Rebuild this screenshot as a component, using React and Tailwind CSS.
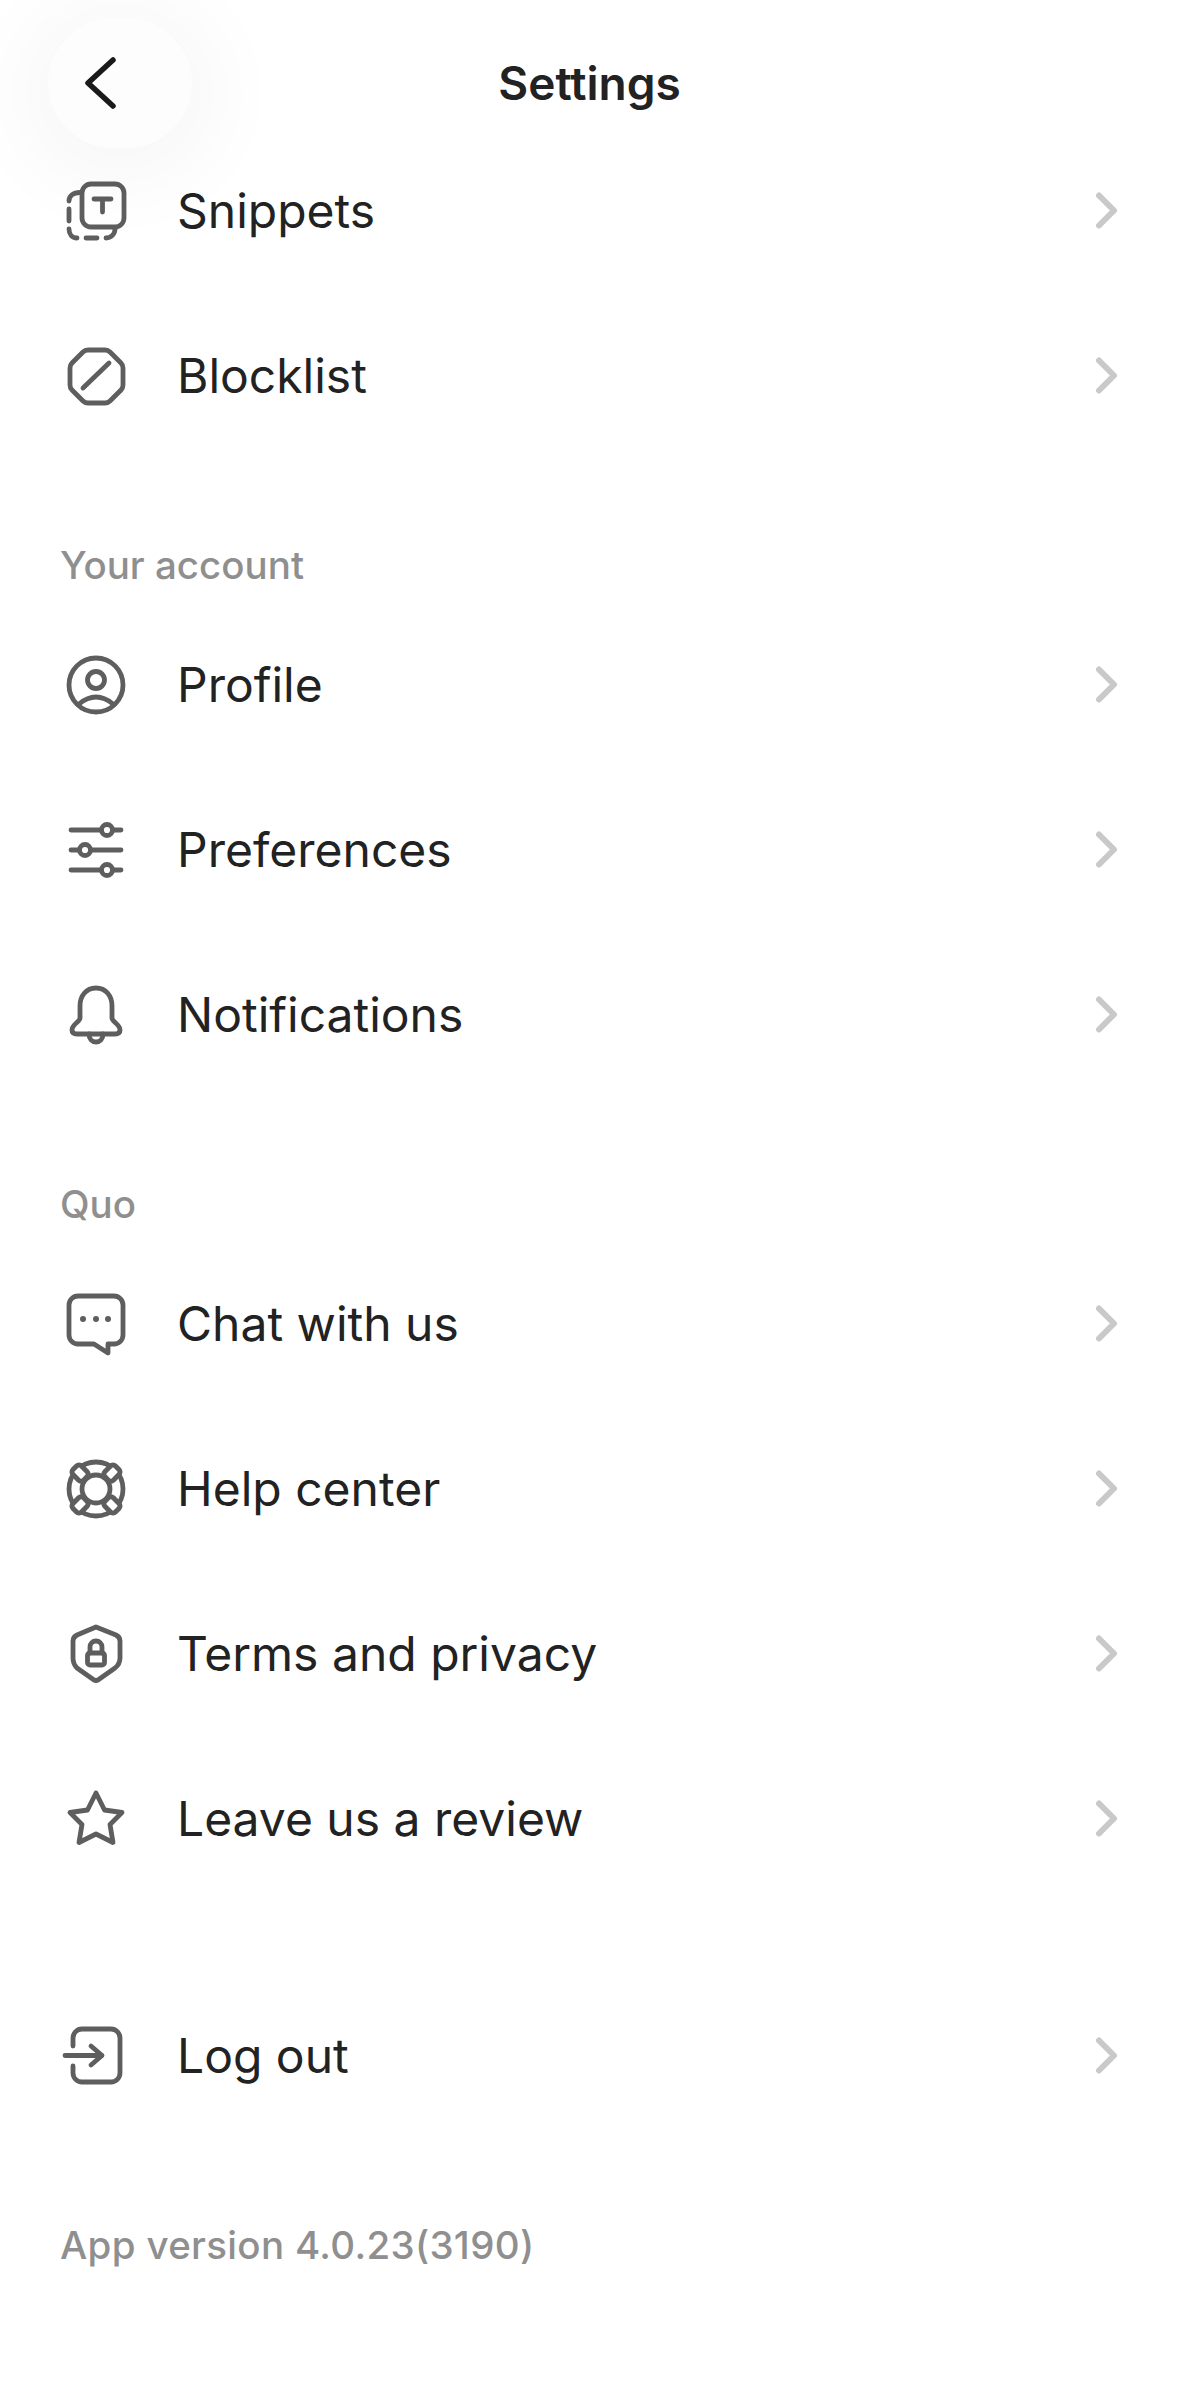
const Icon = ({ children }) => (
  <svg
    viewBox="0 0 72 72"
    fill="none"
    stroke="#5e5e5e"
    strokeWidth="4.8"
    strokeLinecap="round"
    strokeLinejoin="round"
    className="w-[72px] h-[72px] shrink-0"
  >
    {children}
  </svg>
);

const icons = {
  snippets: (
    <>
      <rect x="22" y="9" width="42" height="43" rx="9" />
      <path d="M34 24H51M42.5 24V37" />
      <path d="M20 17.5C13 17.5 9 21 9 26M9 34V46M9 54C9 59 12 63 17 63M26 63H37M46 63C51 63 55 59 55 54" />
    </>
  ),
  blocklist: (
    <>
      <path d="M28 10H45Q48 10 50 12L61 23Q63 25 63 28V45Q63 48 61 50L50 61Q48 63 45 63H28Q25 63 23 61L12 50Q10 48 10 45V28Q10 25 12 23L23 12Q25 10 28 10Z" />
      <path d="M23 48L49 23" />
    </>
  ),
  profile: (
    <>
      <circle cx="36" cy="36" r="27" />
      <circle cx="36" cy="31" r="8.5" />
      <path d="M19 55Q36 41 53 55" />
    </>
  ),
  preferences: (
    <>
      <path d="M11 16H61M11 36H61M11 56H61" />
      <circle cx="47" cy="16" r="5.5" fill="#fff" />
      <circle cx="25" cy="36" r="5.5" fill="#fff" />
      <circle cx="47" cy="56" r="5.5" fill="#fff" />
    </>
  ),
  notifications: (
    <>
      <path d="M36 9C26 9 20 17 20 27V39C20 43 12 45 12 51C12 54 14 55 17 55H55C58 55 60 54 60 51C60 45 52 43 52 39V27C52 17 46 9 36 9Z" />
      <path d="M29 55C29 60 32 63 36 63C40 63 43 60 43 55" />
    </>
  ),
  chat: (
    <>
      <path d="M18 8H54A9 9 0 0 1 63 17V47A9 9 0 0 1 54 56H48V65L34 56H18A9 9 0 0 1 9 47V17A9 9 0 0 1 18 8Z" />
      <g fill="#5e5e5e" stroke="none">
        <circle cx="23" cy="31" r="3" />
        <circle cx="36" cy="31" r="3" />
        <circle cx="48" cy="31" r="3" />
      </g>
    </>
  ),
  help: (
    <>
      <circle cx="36" cy="36" r="27" />
      <circle cx="36" cy="36" r="14" />
      <g fill="#fff" strokeWidth="5">
        <rect x="30" y="6" width="12" height="15" rx="3.5" transform="rotate(45 36 36)" />
        <rect x="30" y="6" width="12" height="15" rx="3.5" transform="rotate(135 36 36)" />
        <rect x="30" y="6" width="12" height="15" rx="3.5" transform="rotate(225 36 36)" />
        <rect x="30" y="6" width="12" height="15" rx="3.5" transform="rotate(315 36 36)" />
      </g>
    </>
  ),
  terms: (
    <>
      <path d="M36 9L56 17Q60 19 60 23V40Q60 46 55 50L38 62Q36 63 34 62L17 50Q13 46 13 40V23Q13 19 17 17Z" />
      <rect x="27.5" y="35" width="17" height="12" rx="2.5" />
      <path d="M30 35V29A6 6 0 0 1 42 29V35" />
    </>
  ),
  review: <path d="M36 10L44.5 27L62 29.5L50 41.5L53 59.5L36 51L19 59.5L22 41.5L10 29.5L27.5 27Z" />,
  logout: (
    <>
      <path d="M13 26V18A9 9 0 0 1 22 9H51A9 9 0 0 1 60 18V53A9 9 0 0 1 51 62H22A9 9 0 0 1 13 53V46" />
      <path d="M5 35.5H42M31 26L42 35.5L31 45" />
    </>
  ),
};

function Row({ icon, label }) {
  return (
    <div className="flex items-center h-[165px] pl-[60px] pr-[55px]">
      <Icon>{icons[icon]}</Icon>
      <span className="ml-[45px] flex-1 text-[48px] leading-none text-[#222222]">{label}</span>
      <svg
        viewBox="0 0 30 42"
        fill="none"
        stroke="#c9c9c9"
        strokeWidth="6"
        strokeLinecap="round"
        strokeLinejoin="round"
        className="w-[30px] h-[42px]"
      >
        <path d="M5 5.5L20 20.5L5 35.5" />
      </svg>
    </div>
  );
}

function SectionLabel({ children }) {
  return <div className="pl-[60px] text-[38.5px] leading-[46px] font-medium text-[#8f8f8f]">{children}</div>;
}

export default function App() {
  return (
    <div className="relative w-[1179px] h-[2396px] bg-white overflow-hidden font-['Inter',sans-serif]">
      <div className="h-[128px] pt-[56px] text-center text-[46px] leading-[54px] font-semibold text-[#222222]">
        Settings
      </div>
      <button className="absolute left-[48px] top-[18px] w-[144px] h-[130px] rounded-full bg-[#fdfdfd] shadow-[0_10px_80px_30px_rgba(0,0,0,0.03)]">
        <svg
          viewBox="0 0 144 130"
          fill="none"
          stroke="#1a1a1a"
          strokeWidth="5.5"
          strokeLinecap="round"
          strokeLinejoin="round"
          className="w-[144px] h-[130px]"
        >
          <path d="M65 42L40 65L65 88" />
        </svg>
      </button>

      <Row icon="snippets" label="Snippets" />
      <Row icon="blocklist" label="Blocklist" />

      <div className="mt-[84px] mb-[14px]">
        <SectionLabel>Your account</SectionLabel>
      </div>
      <Row icon="profile" label="Profile" />
      <Row icon="preferences" label="Preferences" />
      <Row icon="notifications" label="Notifications" />

      <div className="mt-[84px] mb-[14px]">
        <SectionLabel>Quo</SectionLabel>
      </div>
      <Row icon="chat" label="Chat with us" />
      <Row icon="help" label="Help center" />
      <Row icon="terms" label="Terms and privacy" />
      <Row icon="review" label="Leave us a review" />

      <div className="mt-[72px]">
        <Row icon="logout" label="Log out" />
      </div>

      <div className="mt-[84px] tracking-[0.32px]">
        <SectionLabel>App version 4.0.23(3190)</SectionLabel>
      </div>
    </div>
  );
}
